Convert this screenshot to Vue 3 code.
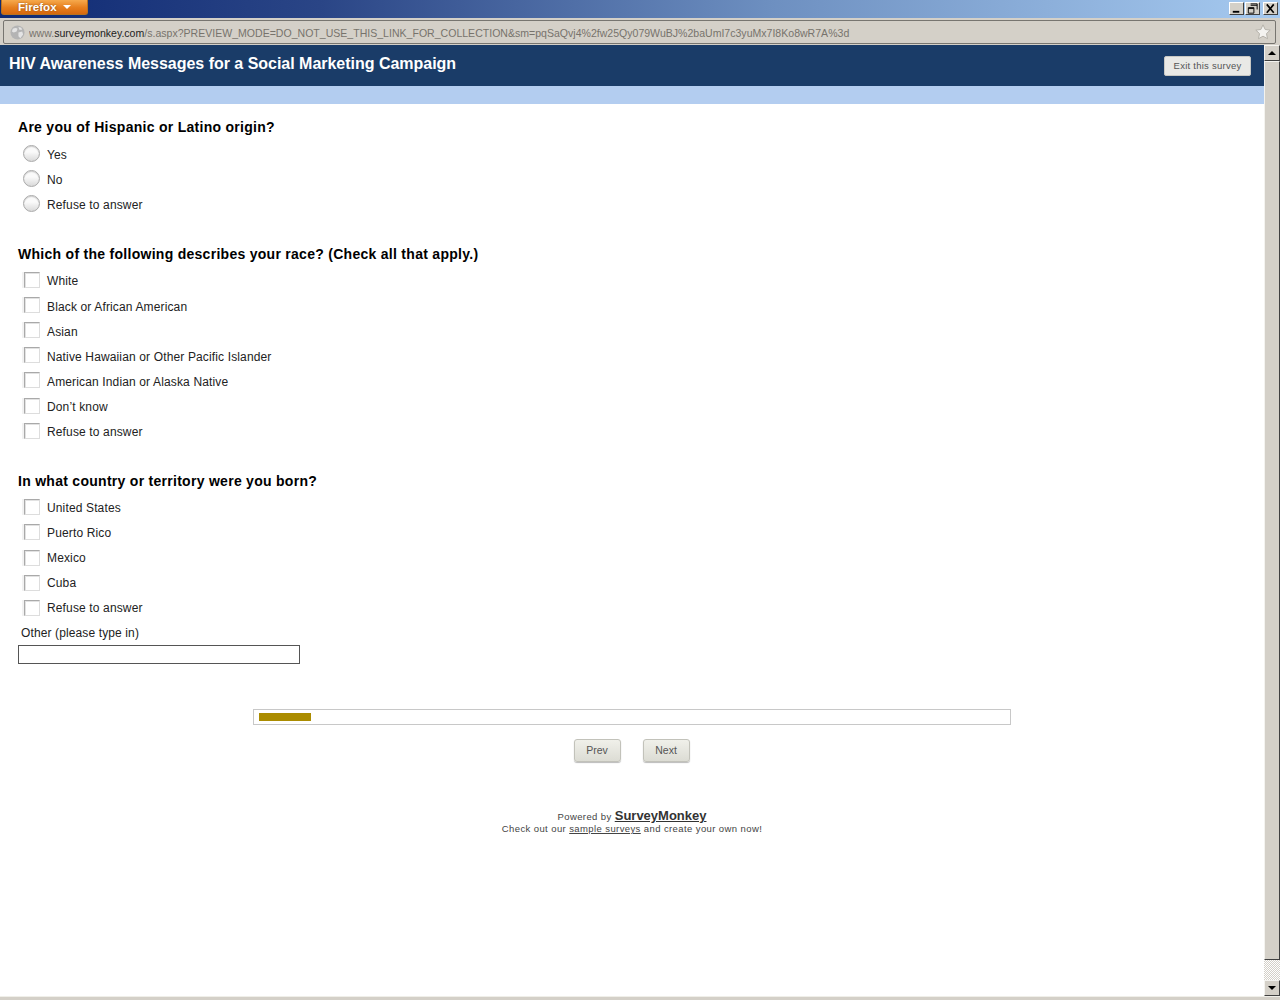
<script setup>
const groups = [
  { q: 'Are you of Hispanic or Latino origin?', type: 'radio', opts: ['Yes', 'No', 'Refuse to answer'] },
  { q: 'Which of the following describes your race? (Check all that apply.)', type: 'check', opts: ['White', 'Black or African American', 'Asian', 'Native Hawaiian or Other Pacific Islander', 'American Indian or Alaska Native', 'Don’t know', 'Refuse to answer'] },
  { q: 'In what country or territory were you born?', type: 'check', opts: ['United States', 'Puerto Rico', 'Mexico', 'Cuba', 'Refuse to answer'] }
]
</script>

<template>
  <div class="win">
    <div class="titlebar">
      <div class="ffbtn">Firefox <span class="caret"></span></div>
      <div class="winbtns">
        <div class="wb"><svg width="14" height="12" viewBox="0 0 14 12"><rect x="3" y="8" width="7" height="2" fill="#000"/></svg></div>
        <div class="wb"><svg width="14" height="12" viewBox="0 0 14 12"><path d="M5 .5h7v6M5 2h7M2.5 4.5h6v6h-6zM2.5 5.5h6" fill="none" stroke="#000"/></svg></div>
        <div class="wb wb-close"><svg width="14" height="12" viewBox="0 0 14 12"><path d="M3 1l7.5 9M10.5 1L3 10" stroke="#000" stroke-width="1.8" fill="none"/></svg></div>
      </div>
    </div>
    <div class="chrome">
      <div class="urlbar">
        <svg class="globe" width="15" height="15" viewBox="0 0 16 16"><circle cx="8" cy="8" r="7.5" fill="#b4b4b4"/><path d="M3 4c2-1 4-1 5 0l-1 3-3 1-2-1zM9 8l4-1 1 3-3 4-2-2zM9 2l3 1 1 2-3 0z" fill="#e4e4e4"/></svg>
        <span class="url">www.<b>surveymonkey.com</b>/s.aspx?PREVIEW_MODE=DO_NOT_USE_THIS_LINK_FOR_COLLECTION&amp;sm=pqSaQvj4%2fw25Qy079WuBJ%2baUmI7c3yuMx7I8Ko8wR7A%3d</span>
        <svg class="star" width="16" height="16" viewBox="0 0 16 16"><path d="M8 .8l2.2 4.7 5 .6-3.7 3.5 1 5.1L8 12.2l-4.5 2.5 1-5.1L.8 6.1l5-.6z" fill="#f4f3f0" stroke="#b5b2aa"/></svg>
      </div>
    </div>
    <div class="main">
      <div class="page">
        <header class="hdr">
          <h1>HIV Awareness Messages for a Social Marketing Campaign</h1>
          <button class="exit">Exit this survey</button>
        </header>
        <div class="band"></div>
        <section v-for="g in groups" :key="g.q" class="group">
          <h2>{{ g.q }}</h2>
          <label v-for="o in g.opts" :key="o" class="opt">
            <span v-if="g.type === 'radio'" class="radio"></span>
            <span v-else class="check"></span>
            <span class="txt">{{ o }}</span>
          </label>
        </section>
        <div class="other">
          <div class="other-label">Other (please type in)</div>
          <div class="textbox"></div>
        </div>
        <div class="progress"><div class="fill" :style="{ width: '52px' }"></div></div>
        <div class="nav">
          <button class="navbtn">Prev</button>
          <button class="navbtn">Next</button>
        </div>
        <footer class="foot">
          <div class="foot-1">Powered by <a>SurveyMonkey</a></div>
          <div class="foot-2">Check out our <u>sample surveys</u> and create your own now!</div>
        </footer>
      </div>
      <div class="scrollbar">
        <div class="sbtn"><span class="up"></span></div>
        <div class="thumb"></div>
        <div class="track"></div>
        <div class="sbtn"><span class="down"></span></div>
      </div>
    </div>
    <div class="status"></div>
  </div>
</template>

<style>
html, body { margin: 0; padding: 0; background: #fff; overflow: hidden; }
</style>

<style scoped>
.win { width: 1280px; height: 1000px; display: flex; flex-direction: column; font-family: "Liberation Sans", Arial, sans-serif; overflow: hidden; }
.titlebar { height: 18px; flex: none; display: flex; justify-content: space-between; background: linear-gradient(90deg, #0f2a74 0%, #2a4586 25%, #6d8fc0 60%, #a6caf0 100%); }
.ffbtn { width: 87px; height: 15px; margin-left: 1px; box-sizing: border-box; padding-left: 16px; background: linear-gradient(#f6a94c, #e67e1d 55%, #d7680f); border: 1px solid #b9731f; border-top: 0; border-radius: 0 0 3px 3px; color: #fff; font: bold 11.6px/14px "Liberation Sans", sans-serif; text-shadow: 0 0 2px #8a4a10; }
.caret { display: inline-block; width: 0; height: 0; border: 4px solid transparent; border-top: 4px solid #fff; border-bottom: 0; margin-left: 3px; vertical-align: 2px; }
.winbtns { display: flex; gap: 1px; padding: 2px 2px 0 0; }
.wb { width: 15px; height: 13px; background: #d4d0c8; border: 1px solid; border-color: #fff #404040 #404040 #fff; box-sizing: border-box; display: flex; align-items: center; justify-content: center; overflow: hidden; }
.wb-close { margin-left: 2px; }
.chrome { height: 27px; flex: none; background: #d4d0c8; padding: 2px 4px 1px 3px; box-sizing: border-box; }
.urlbar { height: 24px; box-sizing: border-box; border: 1px solid #777570; border-radius: 2px; display: flex; align-items: center; padding: 0 4px 0 6px; background: #d4d0c8; }
.url { flex: 1; margin-left: 4px; padding-top: 1px; font-size: 10.55px; color: #77736c; white-space: nowrap; overflow: hidden; }
.url b { font-weight: normal; color: #222; }
.globe { flex: none; }
.star { flex: none; }
.main { flex: 1; display: flex; min-height: 0; }
.page { flex: 1; min-width: 0; background: #fff; color: #222; }
.hdr { height: 41px; background: #1a3c68; display: flex; justify-content: space-between; padding: 11px 13px 0 9px; box-sizing: border-box; }
h1 { margin: 0; font-size: 16px; line-height: 15px; font-weight: bold; color: #fff; letter-spacing: -.02px; }
.exit { width: 87px; height: 20px; margin-top: 0; padding: 0; background: #e9e9e6; border: 1px solid #c8c8c4; border-radius: 2px; font: 9.5px/16px "Liberation Sans", sans-serif; color: #555; letter-spacing: .25px; }
.band { height: 18px; background: #b3cdf0; }
.group { padding: 0 18px; margin-bottom: 29.4px; }
.group:first-of-type { margin-top: 15px; }
h2 { margin: 0 0 6px; font-size: 14px; line-height: 16px; font-weight: bold; color: #000; letter-spacing: .28px; }
.opt { display: flex; align-items: center; height: 25.15px; font-size: 12px; letter-spacing: .14px; color: #222; }
.group:nth-of-type(-n+2) .txt { padding-top: 2px; }
.radio { width: 17px; height: 17px; margin: 0 7px 0 5px; border-radius: 50%; border: 1px solid #aaa; box-sizing: border-box; background: linear-gradient(#fafafa 40%, #d9d9d9); box-shadow: inset 0 1px 1px #ccc; flex: none; }
.check { width: 16px; height: 16px; margin: -1px 7px 0 6px; border: 1px solid #a9a9a9; border-right-color: #ddd; border-bottom-color: #ddd; box-sizing: border-box; background: #fff; box-shadow: inset 1px 1px 0 #e2e2e2, -2px 0 0 #f2f2f2; flex: none; }
.other { padding: 0 18px; margin-top: -24px; }
.other-label { padding-left: 3px; font-size: 12px; line-height: 14px; letter-spacing: .12px; }
.textbox { width: 282px; height: 19px; margin-top: 5px; box-sizing: border-box; border: 1px solid #555; }
.progress { width: 758px; height: 16px; margin: 45px auto 0; box-sizing: border-box; border: 1px solid #c8c8c8; padding: 3px 5px; }
.fill { height: 8px; background: #ab8c00; }
.nav { display: flex; justify-content: center; gap: 22px; margin-top: 14px; }
.navbtn { width: 47px; height: 23px; padding: 0 1px 2px 0; background: linear-gradient(#f0f0ea, #dcdcd4); border: 1px solid #c2c2ba; border-radius: 3px; box-shadow: 0 1px 1px #bbb; font: 10.5px "Liberation Sans", sans-serif; color: #555; }
.foot { margin-top: 47px; text-align: center; color: #444; font-size: 9.5px; letter-spacing: .4px; }
.foot-1 { line-height: 13px; }
.foot-1 a { font-size: 13px; font-weight: bold; text-decoration: underline; color: #333; letter-spacing: 0; }
.foot-2 { line-height: 12px; }
.scrollbar { width: 16px; flex: none; display: flex; flex-direction: column; background-color: #fff; }
.sbtn { height: 16px; flex: none; box-sizing: border-box; background: #d4d0c8; border: 1px solid; border-color: #f4f3ef #404040 #404040 #f4f3ef; display: flex; align-items: center; justify-content: center; }
.up { border: 4px solid transparent; border-bottom: 4px solid #000; border-top: 0; }
.down { border: 4px solid transparent; border-top: 4px solid #000; border-bottom: 0; }
.thumb { flex: 1; box-sizing: border-box; background: #d4d0c8; border: 1px solid; border-color: #f4f3ef #404040 #404040 #f4f3ef; }
.track { height: 20px; flex: none; background: repeating-conic-gradient(#d4d0c8 0 25%, #fff 0 50%) 0 0 / 2px 2px; }
.status { height: 4px; flex: none; background: #d4d0c8; border-top: 1px solid #f0efe9; box-sizing: border-box; }
</style>
